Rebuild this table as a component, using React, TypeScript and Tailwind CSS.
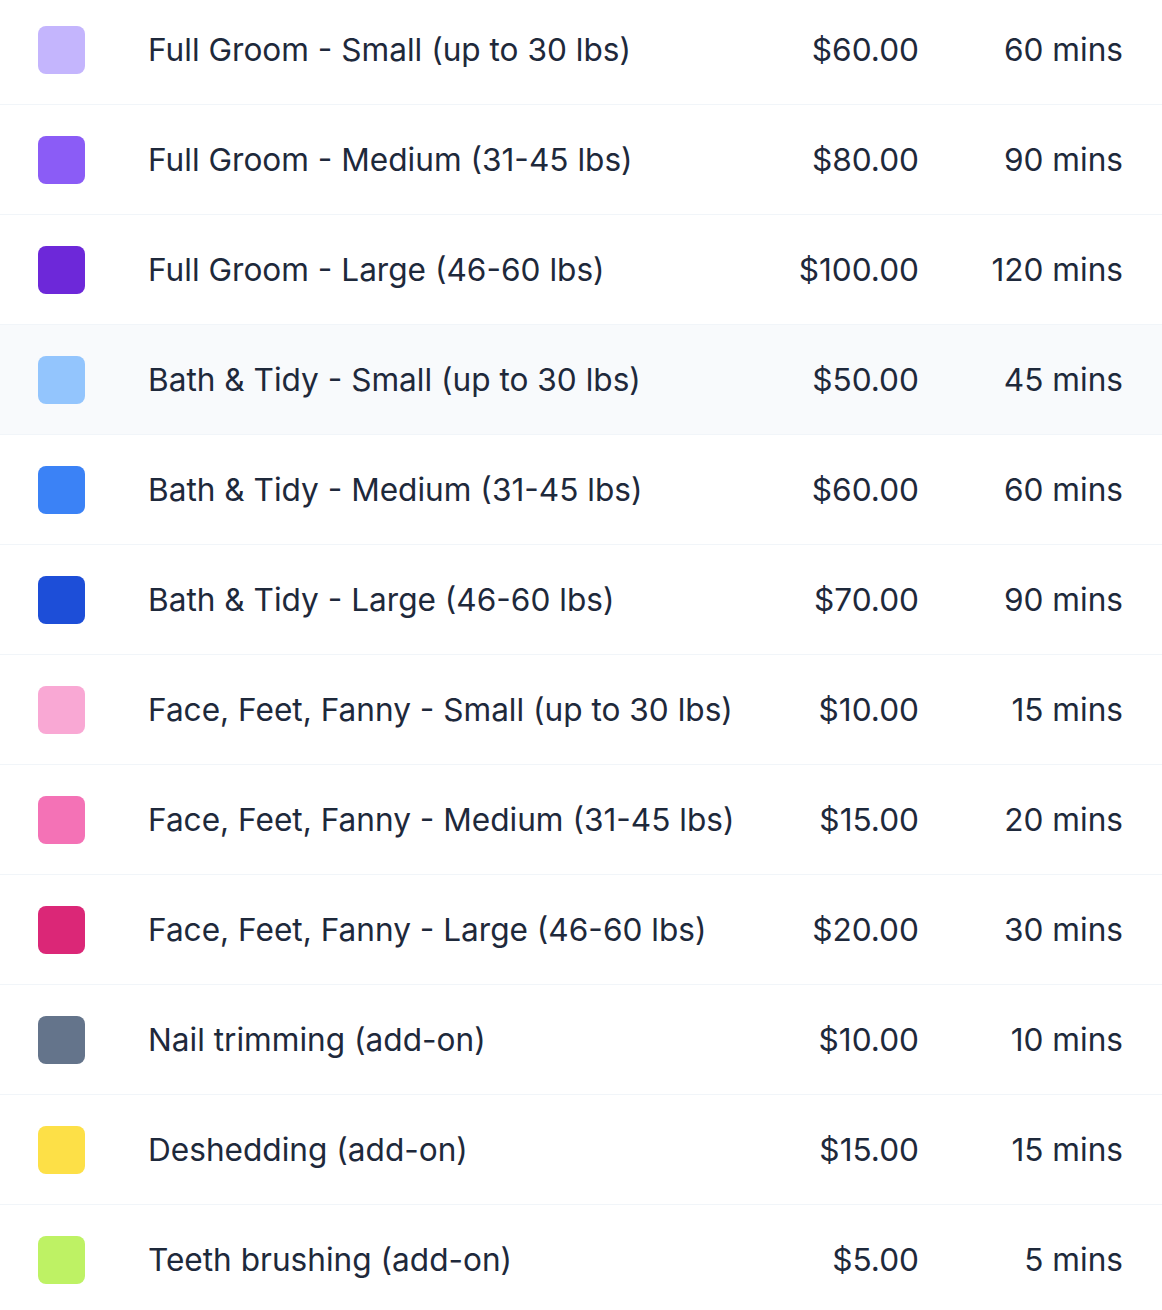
import React from 'react';

interface Service {
  name: string;
  color: string;
  price: string;
  duration: string;
}

const services: Service[] = [
  { name: 'Full Groom - Small (up to 30 lbs)', color: 'bg-[#c4b5fd]', price: '$60.00', duration: '60 mins' },
  { name: 'Full Groom - Medium (31-45 lbs)', color: 'bg-[#8b5cf6]', price: '$80.00', duration: '90 mins' },
  { name: 'Full Groom - Large (46-60 lbs)', color: 'bg-[#6d28d9]', price: '$100.00', duration: '120 mins' },
  { name: 'Bath & Tidy - Small (up to 30 lbs)', color: 'bg-[#93c5fd]', price: '$50.00', duration: '45 mins' },
  { name: 'Bath & Tidy - Medium (31-45 lbs)', color: 'bg-[#3b82f6]', price: '$60.00', duration: '60 mins' },
  { name: 'Bath & Tidy - Large (46-60 lbs)', color: 'bg-[#1d4ed8]', price: '$70.00', duration: '90 mins' },
  { name: 'Face, Feet, Fanny - Small (up to 30 lbs)', color: 'bg-[#f9a8d4]', price: '$10.00', duration: '15 mins' },
  { name: 'Face, Feet, Fanny - Medium (31-45 lbs)', color: 'bg-[#f472b6]', price: '$15.00', duration: '20 mins' },
  { name: 'Face, Feet, Fanny - Large (46-60 lbs)', color: 'bg-[#db2777]', price: '$20.00', duration: '30 mins' },
  { name: 'Nail trimming (add-on)', color: 'bg-[#64748b]', price: '$10.00', duration: '10 mins' },
  { name: 'Deshedding (add-on)', color: 'bg-[#fde047]', price: '$15.00', duration: '15 mins' },
  { name: 'Teeth brushing (add-on)', color: 'bg-[#bef264]', price: '$5.00', duration: '5 mins' },
];

export default function App() {
  return (
    <div className="w-full bg-white overflow-hidden h-[1310px] font-['Inter',sans-serif] text-[#1e293b]">
      <div className="-mt-[5px]">
        {services.map((s, index) => (
          <div
            key={index}
            className={`flex items-center h-[110px] border-b border-[#f1f5f9] pl-[38px] pr-[39px] ${
              index === 3 ? 'bg-[#f8fafc]' : 'bg-white'
            }`}
          >
            <div className={`w-[47px] h-[48px] rounded-[8px] shrink-0 ${s.color}`} />
            <div className="flex-1 ml-[63px] text-[31.6px] leading-none whitespace-nowrap">{s.name}</div>
            <div className="w-[180px] text-right text-[31.6px] leading-none">{s.price}</div>
            <div className="w-[204px] text-right text-[31.6px] leading-none">{s.duration}</div>
          </div>
        ))}
      </div>
    </div>
  );
}
